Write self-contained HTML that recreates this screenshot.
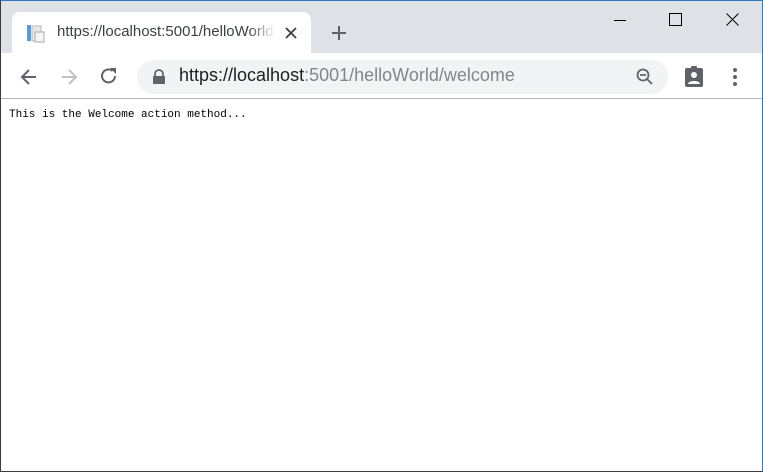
<!DOCTYPE html>
<html><head><style>
*{margin:0;padding:0;box-sizing:border-box}
body{width:763px;height:472px;overflow:hidden;background:#fff;font-family:"Liberation Sans",sans-serif;position:relative}
.frame{position:absolute;inset:0;border:1px solid #2b78c5;border-left-color:#3c3c3c;border-bottom-color:#3c3c3c;pointer-events:none;z-index:9}
.strip{position:absolute;left:0;top:0;width:763px;height:53px;background:#dee1e6}
.tab{position:absolute;left:12px;top:12px;width:299px;height:42px;background:#fff;border-radius:8px 8px 0 0}
.tabt{position:absolute;left:57px;top:23px;font-size:15px;color:#3c4043;width:218px;overflow:hidden;white-space:nowrap;-webkit-mask-image:linear-gradient(90deg,#000 88%,transparent);}
.toolbar{position:absolute;left:0;top:53px;width:763px;height:46px;background:#fff;border-bottom:1px solid #b5b5b5}
.omni{position:absolute;left:137px;top:60px;width:531px;height:34px;background:#f1f3f4;border-radius:17px}
.url{position:absolute;left:179px;top:65px;font-size:18px;color:#80868b;white-space:nowrap}
.url b{font-weight:normal;color:#202124}
.content{position:absolute;left:9px;top:109px;font-family:"Liberation Mono",monospace;font-size:11px;color:#000}
svg{position:absolute}
</style></head><body>
<div class="strip"></div>
<div class="tab"></div>
<svg style="left:26px;top:24px" width="20" height="20"><rect x="1" y="1" width="4" height="16" fill="#5a9bd5"/><rect x="6" y="2" width="9" height="15" fill="#e8e8e8" stroke="#bbb"/><rect x="9" y="8" width="9" height="10" fill="#f5f5f5" stroke="#aaa"/></svg>
<div class="tabt">https://localhost:5001/helloWorld/welcome</div>
<svg style="left:284px;top:26px" width="14" height="14"><path d="M2 2L12 12M12 2L2 12" stroke="#3c4043" stroke-width="1.8"/></svg>
<svg style="left:331px;top:25px" width="16" height="16"><path d="M8 1V15M1 8H15" stroke="#5f6368" stroke-width="2"/></svg>
<svg style="left:612px;top:12px" width="16" height="16"><path d="M2 8.5H14" stroke="#000" stroke-width="1"/></svg>
<svg style="left:668px;top:12px" width="16" height="16"><rect x="1.5" y="1.5" width="12" height="12" fill="none" stroke="#000"/></svg>
<svg style="left:725px;top:12px" width="16" height="16"><path d="M1.5 1.5L13.5 13.5M13.5 1.5L1.5 13.5" stroke="#000" stroke-width="1"/></svg>
<div class="toolbar"></div>
<svg style="left:19px;top:67px" width="20" height="20"><path d="M17 10H4M10 3L3 10L10 17" fill="none" stroke="#5f6368" stroke-width="2"/></svg>
<svg style="left:59px;top:67px" width="20" height="20"><path d="M3 10H16M10 3L17 10L10 17" fill="none" stroke="#bdc1c6" stroke-width="2"/></svg>
<svg style="left:99px;top:66px" width="20" height="20"><path d="M16 10A6.5 6.5 0 1 1 13.5 4.8" fill="none" stroke="#5f6368" stroke-width="2"/><path d="M11 2H17V8Z" fill="#5f6368"/></svg>
<div class="omni"></div>
<svg style="left:152px;top:69px" width="14" height="16"><path d="M3 7V5A4 4 0 0 1 11 5V7" fill="none" stroke="#5f6368" stroke-width="1.8"/><rect x="1" y="7" width="12" height="8" rx="1" fill="#5f6368"/></svg>
<div class="url"><b>https://localhost</b>:5001/helloWorld/welcome</div>
<svg style="left:635px;top:67px" width="20" height="20"><circle cx="8" cy="8" r="5.5" fill="none" stroke="#5f6368" stroke-width="1.8"/><path d="M5 8H11M12 12L17 17" stroke="#5f6368" stroke-width="1.8"/></svg>
<svg style="left:684px;top:65px" width="20" height="24"><rect x="1" y="3" width="18" height="19" rx="2" fill="#5f6368"/><rect x="7" y="1" width="6" height="4" rx="1" fill="#5f6368"/><circle cx="10" cy="10" r="3" fill="#fff"/><path d="M4 19C4 15 16 15 16 19Z" fill="#fff"/></svg>
<svg style="left:731px;top:67px" width="8" height="20"><circle cx="4" cy="3" r="2" fill="#5f6368"/><circle cx="4" cy="10" r="2" fill="#5f6368"/><circle cx="4" cy="17" r="2" fill="#5f6368"/></svg>
<div class="content">This is the Welcome action method...</div>
<div class="frame"></div>
</body></html>
